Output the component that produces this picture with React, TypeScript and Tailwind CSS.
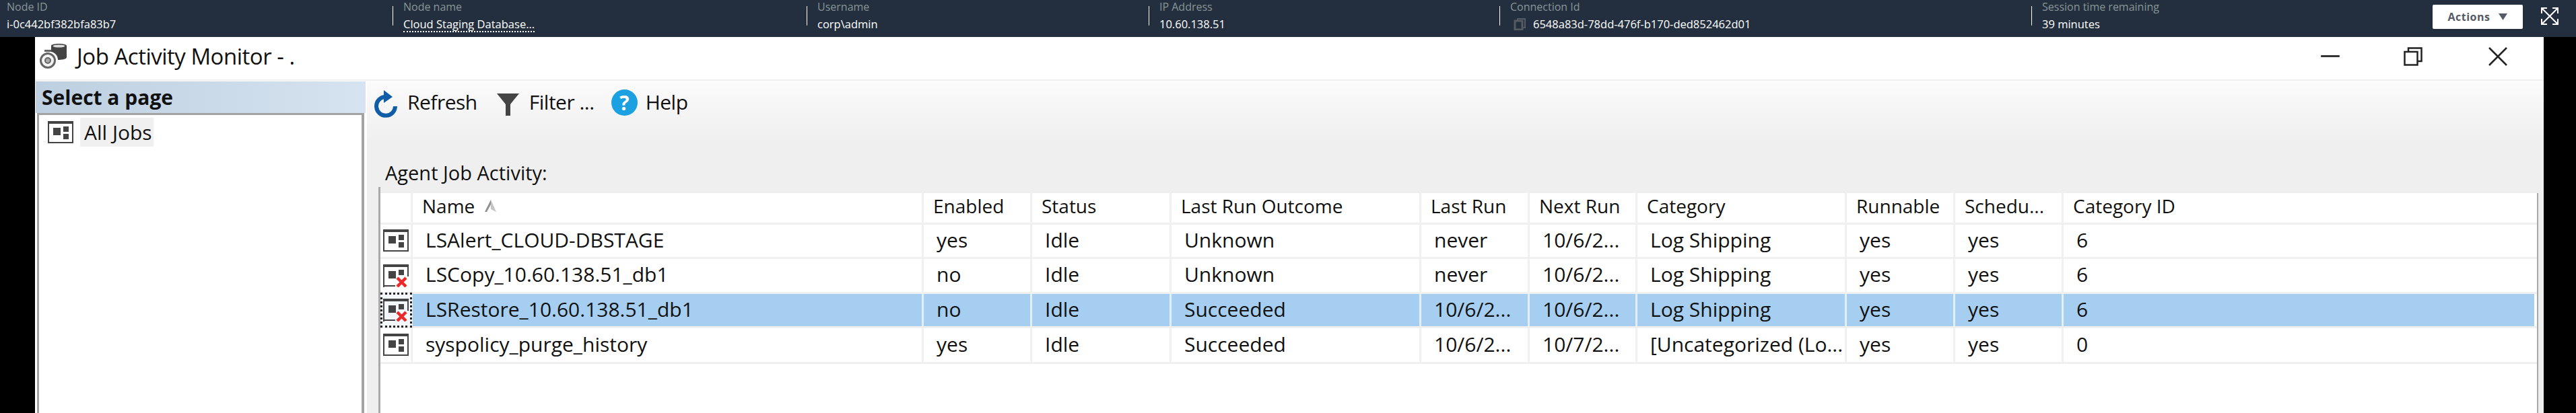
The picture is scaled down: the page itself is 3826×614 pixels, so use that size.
import React from "react";

const fields = [
  { w: "w-[583px]", label: "Node ID", value: "i-0c442bf382bfa83b7", first: true },
  { w: "w-[615px]", label: "Node name", value: "Cloud Staging Database...", dotted: true },
  { w: "w-[508px]", label: "Username", value: "corp\\admin" },
  { w: "w-[521px]", label: "IP Address", value: "10.60.138.51" },
  { w: "w-[790px]", label: "Connection Id", value: "6548a83d-78dd-476f-b170-ded852462d01", copy: true },
  { w: "w-[596px]", label: "Session time remaining", value: "39 minutes" },
];

const cols = [
  { w: "w-[759px]", label: "Name" },
  { w: "w-[161px]", label: "Enabled" },
  { w: "w-[207px]", label: "Status" },
  { w: "w-[371px]", label: "Last Run Outcome" },
  { w: "w-[161px]", label: "Last Run" },
  { w: "w-[160px]", label: "Next Run" },
  { w: "w-[311px]", label: "Category" },
  { w: "w-[161px]", label: "Runnable" },
  { w: "w-[161px]", label: "Schedu..." },
  { w: "w-[699px]", label: "Category ID" },
];

const rows = [
  { h: "h-[51px]", err: false, sel: false, cells: ["LSAlert_CLOUD-DBSTAGE", "yes", "Idle", "Unknown", "never", "10/6/2...", "Log Shipping", "yes", "yes", "6"] },
  { h: "h-[52px]", err: true, sel: false, cells: ["LSCopy_10.60.138.51_db1", "no", "Idle", "Unknown", "never", "10/6/2...", "Log Shipping", "yes", "yes", "6"] },
  { h: "h-[51px]", err: true, sel: true, cells: ["LSRestore_10.60.138.51_db1", "no", "Idle", "Succeeded", "10/6/2...", "10/6/2...", "Log Shipping", "yes", "yes", "6"] },
  { h: "h-[53px]", err: false, sel: false, cells: ["syspolicy_purge_history", "yes", "Idle", "Succeeded", "10/6/2...", "10/7/2...", "[Uncategorized (Lo...", "yes", "yes", "0"] },
];

function JobIcon({ err = false }: { err?: boolean }) {
  return (
    <svg width="38" height="34" viewBox="0 0 38 34" className="block shrink-0">
      {err ? (
        <path d="M1 34V1H37V18M1 32H18" fill="none" stroke="#444" strokeWidth="2" />
      ) : (
        <rect x="1" y="1" width="36" height="31" fill="none" stroke="#444" strokeWidth="2" />
      )}
      <rect x="0" y="0" width="38" height="4" fill="#444" />
      <rect x="8" y="10" width="11" height="11" fill="#444" />
      <rect x="23" y="8" width="8" height="8" fill="#444" />
      {err ? (
        <path d="M21 20L34 33M34 20L21 33" stroke="#ea2a2a" strokeWidth="4.5" />
      ) : (
        <rect x="23" y="19" width="8" height="8" fill="#444" />
      )}
    </svg>
  );
}

export default function App() {
  return (
    <div className="w-[3826px] h-[614px] bg-black overflow-hidden flex flex-col font-['Open_Sans',sans-serif] text-[#111]">
      <header className="h-[55px] shrink-0 bg-[#232f3e] flex relative text-[16px] leading-[20px]">
        {fields.map((f) => (
          <div key={f.label} className={`${f.w} flex shrink-0`}>
            {!f.first && <div className="w-px h-[29px] mt-[9px] bg-white shrink-0" />}
            <div className={f.first ? "pl-[10px]" : "pl-[15px]"}>
              <div className="text-[#879596] whitespace-nowrap">{f.label}</div>
              <div className="mt-[6px] text-white text-[16.5px] whitespace-nowrap flex items-center">
                {f.copy && (
                  <svg width="19" height="18" viewBox="0 0 19 18" className="mr-[10px] ml-[5px] shrink-0">
                    <path d="M6 3V1H17V14H14" fill="none" stroke="#545b64" strokeWidth="2" />
                    <rect x="2" y="4" width="11" height="13" fill="none" stroke="#545b64" strokeWidth="3" />
                  </svg>
                )}
                <span className={f.dotted ? "border-b-2 border-dotted border-white leading-[20px]" : ""}>{f.value}</span>
              </div>
            </div>
          </div>
        ))}
        <div className="mt-[7px] w-[134px] h-[36px] bg-white rounded-[2px] flex items-center justify-center gap-[13px] text-[#545b64] font-bold text-[16px] tracking-[0.5px] shrink-0">
          <span>Actions</span>
          <svg width="13" height="10" viewBox="0 0 13 10">
            <polygon points="0,0 13,0 6.5,10" fill="#545b64" />
          </svg>
        </div>
        <svg width="26" height="26" viewBox="0 0 26 26" className="ml-[27px] mt-[11px] shrink-0" fill="none" stroke="#fff" strokeWidth="2">
          <path d="M1 9V1H9M17 1H25V9M25 17V25H17M9 25H1V17M2 2L24 24M24 2L2 24" />
        </svg>
      </header>

      <div className="ml-[52px] w-[3726px] h-[559px] bg-white flex flex-col">
        <div className="h-[63px] shrink-0 flex items-center pl-[7px] relative">
          <svg width="40" height="38" viewBox="0 0 40 38" className="shrink-0 -mt-[6px]">
            <path d="M17 3C17 -1 40 -1 40 3V20C40 23 33 24 27 24C27 18 23 13 17 12Z" fill="#444" />
            <ellipse cx="28.5" cy="3.5" rx="9" ry="2" fill="#ddd" />
            <circle cx="12" cy="25" r="10.5" fill="#f4f4f4" stroke="#666" strokeWidth="3" />
            <circle cx="12" cy="25" r="4" fill="#aaa" stroke="#666" strokeWidth="2" />
            <rect x="7" y="9" width="10" height="3" fill="#666" />
          </svg>
          <span className="ml-[15px] text-[33px] tracking-[-0.5px] leading-none -mt-[6px] whitespace-nowrap">Job Activity Monitor - .</span>
          <div className="ml-auto flex items-center -mt-[6px]">
            <div className="w-[28px] h-[3px] bg-[#333] rounded-[1px]" />
            <svg width="28" height="28" viewBox="0 0 28 28" className="ml-[95px]" fill="none" stroke="#222" strokeWidth="2.5">
              <rect x="1.5" y="7" width="19" height="19.5" />
              <path d="M7 7V1.5H26.5V21H20.5" />
            </svg>
            <svg width="28" height="28" viewBox="0 0 28 28" className="ml-[98px] mr-[54px]" fill="none" stroke="#222" strokeWidth="2.5">
              <path d="M1 1L27 27M27 1L1 27" />
            </svg>
          </div>
        </div>

        <div className="flex-1 flex min-h-0 border-t-2 border-[#f0f0f0]">
          <aside className="w-[493px] shrink-0 flex flex-col pt-px">
            <div className="ml-px mr-[2px] h-[47px] shrink-0 bg-gradient-to-r from-[#bdcfe0] to-[#d6e3f0] flex items-center pl-[9px] font-bold text-[30px] leading-none">
              Select a page
            </div>
            <div className="flex-1 ml-[3px] border-l-[3px] border-r-[4px] border-t-[3px] border-[#a3a3a3] mr-[4px] pt-[4px]">
              <div className="flex items-center pl-[13px] h-[43px]">
                <JobIcon />
                <div className="ml-[10px] bg-[#f0f0f0] h-[43px] w-[109px] flex items-center pl-[6px] text-[30px] whitespace-nowrap">All Jobs</div>
              </div>
            </div>
          </aside>

          <main className="flex-1 min-w-0 flex flex-col bg-[#efefef]">
            <div className="h-[90px] shrink-0 bg-gradient-to-b from-[#fbfbfb] to-[#efefef] flex items-start pt-[13px] pl-[11px] text-[30px] tracking-[-0.5px] leading-[38px]">
              <svg width="36" height="42" viewBox="0 0 36 42" className="shrink-0 mt-[1px]" fill="none">
                <path d="M31 24A14 14 0 1 1 15 10" stroke="#0f5ca8" strokeWidth="6" />
                <polygon points="14,0 27,10 14,19" fill="#0f5ca8" />
              </svg>
              <span className="ml-[13px]">Refresh</span>
              <svg width="33" height="33" viewBox="0 0 33 33" className="ml-[29px] mt-[6px] shrink-0">
                <polygon points="0,0 33,0 20,16 20,33 13,33 13,16" fill="#444" />
              </svg>
              <span className="ml-[15px] whitespace-nowrap">Filter ...</span>
              <div className="ml-[25px] w-[39px] h-[39px] rounded-full bg-[#1ba1e2] text-white font-bold text-[30px] leading-[39px] text-center shrink-0">?</div>
              <span className="ml-[12px]">Help</span>
            </div>
            <div className="h-[68px] shrink-0 pl-[27px] pt-[35px] text-[29px] leading-[24px] whitespace-nowrap">Agent Job Activity:</div>
            <div className="flex-1 min-h-0 ml-[17px] mr-[8px] border-l-[3px] border-[#a9a9a9] pt-[9px]">
              <div className="h-full bg-white border-r-[2px] border-[#a9a9a9] text-[30px]">
                <div className="flex h-[47px] border-b-[3px] border-[#f0f0f0]">
                  <div className="w-[48px] shrink-0 border-r-[3px] border-[#f0f0f0]" />
                  {cols.map((c) => (
                    <div key={c.label} className={`${c.w} shrink-0 border-r-[3px] border-[#f0f0f0] pl-[14px] pb-[6px] flex items-center whitespace-nowrap text-[28px] last:border-r-0`}>
                      {c.label}
                      {c.label === "Name" && (
                        <svg width="17" height="18" viewBox="0 0 17 18" className="ml-[15px]">
                          <polygon points="9,0 17,18 9,14" fill="#c4c4c4" />
                          <polygon points="9,0 0,18 3,18 9,7" fill="#8f8f8f" />
                        </svg>
                      )}
                    </div>
                  ))}
                </div>
                {rows.map((r) => (
                  <div key={r.cells[0]} className={`flex ${r.h} border-b-[3px] border-[#f0f0f0]`}>
                    <div className={`w-[48px] shrink-0 border-r-[3px] border-[#f0f0f0] flex items-center justify-center relative ${r.sel ? "bg-[#f4f8fc]" : ""}`}>
                      <JobIcon err={r.err} />
                      {r.sel && <div className="absolute -inset-y-[2px] left-0 right-[-2px] border-[3px] border-dotted border-[#222]" />}
                    </div>
                    {r.cells.map((t, i) => (
                      <div key={i} className={`${cols[i].w} shrink-0 border-r-[3px] pl-[19px] pb-[4px] flex items-center whitespace-nowrap last:border-r-0 ${r.sel ? "bg-[#a5cef0] border-[#e4eef7]" : "border-[#f0f0f0]"}`}>
                        {t}
                      </div>
                    ))}
                  </div>
                ))}
              </div>
            </div>
          </main>
        </div>
      </div>
    </div>
  );
}
